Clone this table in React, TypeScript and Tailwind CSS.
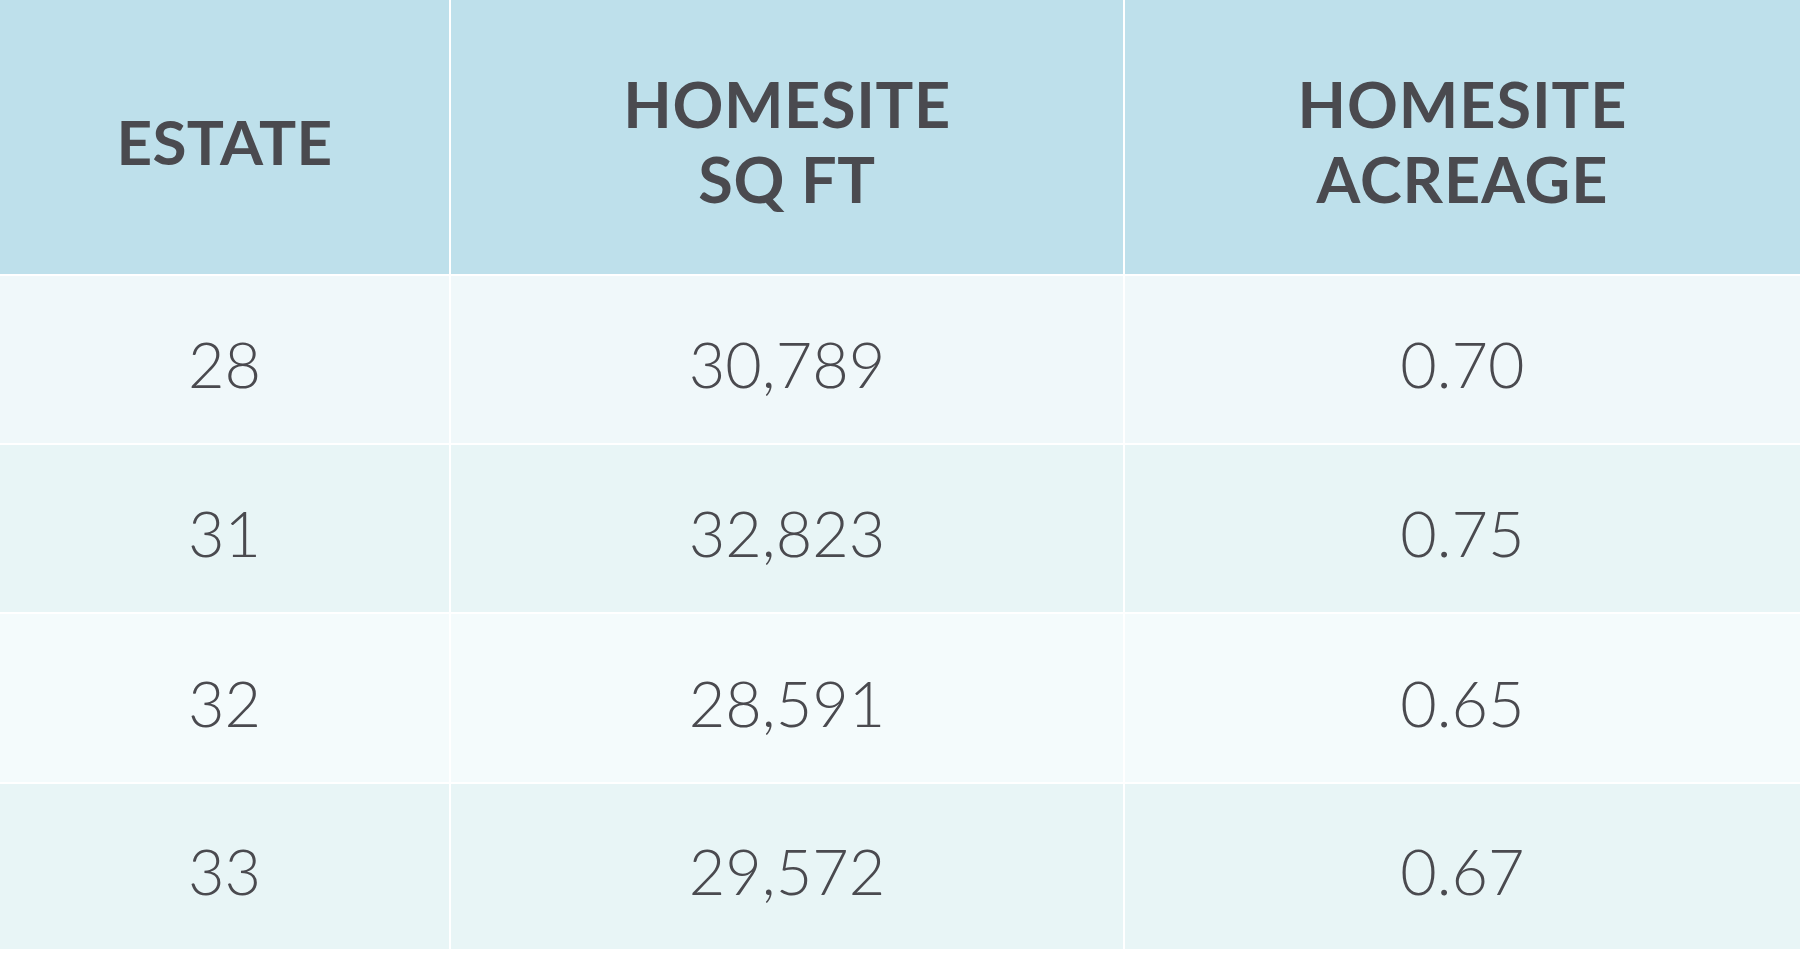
const rows = [
  { estate: "28", sqft: "30,789", acres: "0.70", bg: "bg-[#f0f8fa]" },
  { estate: "31", sqft: "32,823", acres: "0.75", bg: "bg-[#e8f5f6]" },
  { estate: "32", sqft: "28,591", acres: "0.65", bg: "bg-[#f4fbfc]" },
  { estate: "33", sqft: "29,572", acres: "0.67", bg: "bg-[#e8f5f6]" },
];

export default function App() {
  return (
    <div className="w-[1800px] h-[954px] bg-white font-['Lato','Noto_Sans',sans-serif] text-[#4a4a4f]">
      <div className="grid grid-cols-[449px_672px_675px] grid-rows-[274px_167px_167px_168px_165px] gap-[2px]">
        {/* header */}
        <div className="bg-[#bee0eb] flex items-center justify-center pt-[8px]">
          <span className="text-[62px] font-bold leading-none tracking-[0.005em]">ESTATE</span>
        </div>
        <div className="bg-[#bee0eb] flex items-center justify-center pt-[8px]">
          <span className="text-[63px] font-bold leading-[75px] text-center tracking-[0.01em]">
            HOMESITE
            <br />
            SQ FT
          </span>
        </div>
        <div className="bg-[#bee0eb] flex items-center justify-center pt-[8px]">
          <span className="text-[63px] font-bold leading-[75px] text-center tracking-[0.015em]">
            HOMESITE
            <br />
            ACREAGE
          </span>
        </div>

        {/* body rows */}
        {rows.map((r) => (
          <div key={r.estate} className="contents">
            <div className={`${r.bg} flex items-center justify-center pt-[8px]`}>
              <span className="text-[63px] font-light leading-none">{r.estate}</span>
            </div>
            <div className={`${r.bg} flex items-center justify-center pt-[8px]`}>
              <span className="text-[63px] font-light leading-none">{r.sqft}</span>
            </div>
            <div className={`${r.bg} flex items-center justify-center pt-[8px]`}>
              <span className="text-[63px] font-light leading-none">{r.acres}</span>
            </div>
          </div>
        ))}
      </div>
    </div>
  );
}
